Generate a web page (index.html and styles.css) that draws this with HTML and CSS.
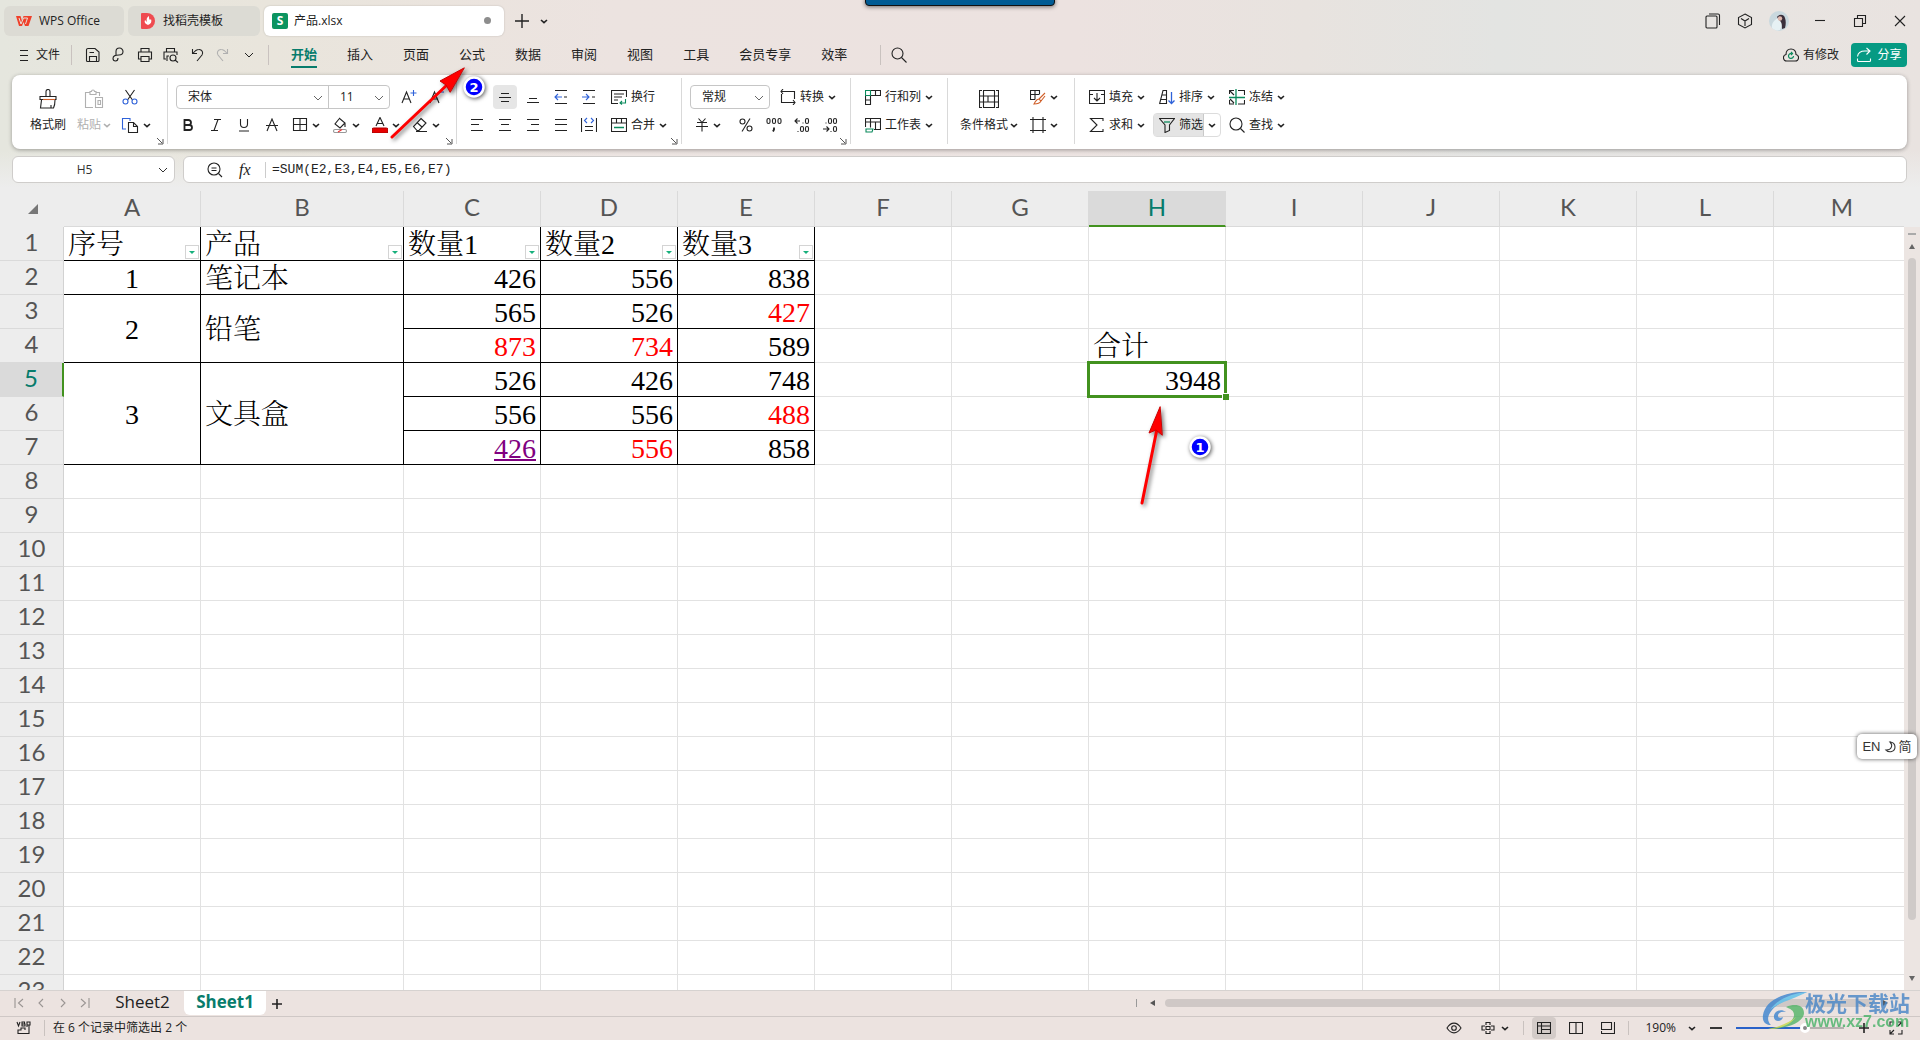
FILE: index.html
```html
<!DOCTYPE html>
<html lang="zh-CN">
<head>
<meta charset="utf-8">
<title>产品.xlsx - WPS Office</title>
<link rel="stylesheet" href="styles.css">
</head>
<body>
<svg class="defs" aria-hidden="true">
  <symbol id="chev" viewBox="0 0 8 8"><path d="M1 3l3 2.600L7 3" stroke-width="1.600"/></symbol>
  <symbol id="chev-lg" viewBox="0 0 10 8"><path d="M1 2l4 4 4-4" stroke-width="1"/></symbol>
  <symbol id="launch" viewBox="0 0 8 8"><path d="M1 1l5 5M7 2v5H2" stroke-width="1"/></symbol>
</svg>

<header class="top">
  <div class="notch"></div>
  <div class="titlebar">
    <button class="doc-tab tab-home"><svg width="16" height="12" viewBox="0 0 16 12"><path d="M0 1h4.500l1.500 5L7.500 1H16l-3.500 10H9L7.500 7 6 11H3z" fill="#f0402a" stroke="none"/><path d="M3 3l2 6 2.500-6h4L9.500 9" stroke="#e5e1da" stroke-width="1"/></svg>WPS Office</button>
    <button class="doc-tab tab-tpl"><svg width="16" height="16" viewBox="0 0 16 16"><path d="M2 0h5a8 8 0 010 16H2a1 1 0 01-1-1V1a1 1 0 011-1z" fill="#ef4b50" stroke="none"/><path d="M8 12c-3-1-4-3-3-5l2 2c-1-3 0-5 2-6 0 2 0 3 1 4l1-1c1 3 0 5-3 6z" fill="#fff" stroke="none"/></svg>找稻壳模板</button>
    <button class="doc-tab tab-doc"><svg width="16" height="16" viewBox="0 0 16 16"><rect width="16" height="16" rx="2" fill="#0c9460" stroke="none"/><text x="8" y="12" text-anchor="middle" class="logo-s">S</text></svg>产品.xlsx<i class="dirty"></i></button>
    <button class="plain add"><svg width="14" height="14" viewBox="0 0 14 14"><path d="M7 0v14M0 7h14" stroke-width="1.400"/></svg></button>
    <button class="plain more"><svg width="8" height="8"><use href="#chev"/></svg></button>
    <div class="window-tools">
      <button class="plain w32"><svg width="16" height="16" viewBox="0 0 16 16"><rect x="1" y="3" width="11" height="12" rx="1"/><path d="M4 1h9a1.500 1.500 0 011.500 1.500V12"/></svg></button>
      <button class="plain w32"><svg width="16" height="16" viewBox="0 0 16 16"><path d="M8 1l6.500 3.500v7L8 15l-6.500-3.500v-7zM4 5.500L8 8l4-2.500M8 8v5"/></svg></button>
      <button class="plain w36 me"><svg width="20" height="20" viewBox="0 0 20 20" class="solid"><circle cx="10" cy="10" r="10" fill="#c9d8de"/><path d="M3 17c-1-5 3-9 7-10l4 4-3 8c-3 1-6 0-8-2z" fill="#e6f1f4"/><path d="M8 6c2-3 7-3 8 1 1 3 1 6 0 10l-3 1c0-4 0-7-3-9z" fill="#3a2f3b"/><ellipse cx="11" cy="7.500" rx="2.200" ry="2.200" fill="#e0b8ae"/></svg></button>
      <button class="plain w40"><svg width="12" height="12" viewBox="0 0 12 12"><path d="M1 5.500h10"/></svg></button>
      <button class="plain w40"><svg width="14" height="14" viewBox="0 0 14 14"><path d="M1.500 4.500h8v8h-8zM4.500 4.500v-3h8v8h-3"/></svg></button>
      <button class="plain w40"><svg width="12" height="12" viewBox="0 0 12 12"><path d="M1 1l10 10M11 1L1 11"/></svg></button>
    </div>
  </div>

  <nav class="menubar">
    <button class="plain file"><svg width="10" height="14" viewBox="0 0 10 14"><path d="M1 2.500h8M1 7.500h8M1 12.500h8"/></svg>文件</button>
    <span class="vsep"></span>
    <div class="quick">
      <button class="plain"><svg width="16" height="16" viewBox="0 0 16 16"><path d="M3 1.500h7L14 5v8.500a1 1 0 01-1 1H2.500a1 1 0 01-1-1V3A1.500 1.500 0 013 1.500zM4.500 14.500v-5h7v5M4.500 5.500H9"/></svg></button>
      <button class="plain"><svg width="16" height="16" viewBox="0 0 16 16"><path d="M5 9V4.500a3.500 3.500 0 117 0C12 7 10 8 8 8c-4 0-6 1-6 3.500A2.500 2.500 0 004.500 14C7 14 7 12 7 11"/></svg></button>
      <button class="plain"><svg width="16" height="16" viewBox="0 0 16 16"><path d="M4 5V1.500h8V5M4 12H1.500V5h13v7H12M4 9.500h8v5H4z"/></svg></button>
      <button class="plain"><svg width="16" height="16" viewBox="0 0 16 16"><path d="M3.500 5V1.500h8V5M3 12H1V5h13v3M4 14V9h2"/><circle cx="10" cy="11" r="3"/><path d="M12 13l3 2.500"/></svg></button>
      <button class="plain"><svg width="16" height="16" viewBox="0 0 16 16"><path d="M3.500 2v4.500H8M4 6.500c2-3 4-4 6-4a3.500 3.500 0 013 5.500L8 14"/></svg></button>
      <button class="plain faded"><svg width="16" height="16" viewBox="0 0 16 16"><path d="M12.500 2v4.500H8M12 6.500c-2-3-4-4-6-4A3.500 3.500 0 003 8l5 6"/></svg></button>
      <button class="plain"><svg width="10" height="8"><use href="#chev-lg"/></svg></button>
    </div>
    <span class="vsep"></span>
    <div class="tabs">
      <a href="#" class="on">开始</a><a href="#">插入</a><a href="#">页面</a><a href="#">公式</a><a href="#">数据</a><a href="#">审阅</a><a href="#">视图</a><a href="#">工具</a><a href="#">会员专享</a><a href="#">效率</a>
    </div>
    <span class="vsep"></span>
    <button class="plain find"><svg width="16" height="16" viewBox="0 0 16 16"><circle cx="6.500" cy="6.500" r="5.500"/><path d="M10.500 10.500L15.500 15.500"/></svg></button>
    <button class="plain cloud"><svg width="16" height="14" viewBox="0 0 16 14"><path d="M4 13a3.300 3.300 0 01-1-6.500C3 3 5 1 8 1s5 2 5 5.500A3.300 3.300 0 0112 13z"/><path d="M10.500 8a2.500 2.500 0 11-2-2.500M8 4l1.500 1.500L8 7" stroke="#0b8a5c" stroke-width="1.200"/></svg>有修改</button>
    <button class="share"><svg width="16" height="16" viewBox="0 0 16 16"><path d="M1.500 9.500C2 6 5 4 9 4h5M10.500 1L14 4l-3.500 3.500M1.500 11.500v2a1 1 0 001 1h11a1 1 0 001-1v-2"/></svg>分享</button>
  </nav>

  <section class="ribbon">
    <div class="group g-clip">
      <button class="big w48"><svg width="20" height="20" viewBox="0 0 20 20"><path d="M2 7.500h16v3H2zM3.500 11l-1 8h13c1-2 1.500-5 1.500-8M8 7V2.500a2 2 0 014 0V7M13 19v-3"/><path d="M5 10.500h12" stroke="#d0602a"/></svg><span>格式刷</span></button>
      <button class="big w44 faded"><svg width="20" height="20" viewBox="0 0 20 20"><path d="M9 18.500H1.500v-15H6M12 3.500h3.500V7M6 2.500h1.500a1.500 1.500 0 013 0H12v3H6zM11.500 8.500h7v10h-7zM14 11.500h2.500v4H14z"/></svg><span>粘贴<svg width="8" height="8"><use href="#chev"/></svg></span></button>
      <div class="rows">
        <div class="row"><button class="ib"><svg width="16" height="16" viewBox="0 0 16 16"><path d="M3.500 1l7 10M12.500 1l-7 10"/><circle cx="3.500" cy="12.500" r="2.500" stroke="#2f62d9"/><circle cx="12.500" cy="12.500" r="2.500" stroke="#2f62d9"/></svg></button></div>
        <div class="row"><button class="dd"><svg width="18" height="16" viewBox="0 0 18 16"><path d="M5 12H1.500V1.500H9V4" stroke="#2f62d9"/><path d="M7.500 5.500h5l4 4v6h-9zM12.500 5.500v4h4"/></svg><svg width="8" height="8"><use href="#chev"/></svg></button></div>
      </div>
      <svg class="launch" width="8" height="8"><use href="#launch"/></svg>
    </div>

    <div class="group g-font">
      <div class="rows">
        <div class="row">
          <div class="pair">
            <label class="sel sel-font"><select aria-label="字体"><option>宋体</option></select><svg width="10" height="8"><use href="#chev-lg"/></svg></label>
            <label class="sel sel-size"><select aria-label="字号"><option>11</option></select><svg width="10" height="8"><use href="#chev-lg"/></svg></label>
          </div>
          <button class="ib"><svg width="16" height="16" viewBox="0 0 16 16"><path d="M1 14L5.500 3 10 14M2.500 10h6"/><path d="M12.500 1v6M9.500 4h6" stroke="#2f62d9"/></svg></button>
          <button class="ib"><svg width="16" height="16" viewBox="0 0 16 16"><path d="M1 14L5.500 3 10 14M2.500 10h6"/><path d="M10 3h5" stroke="#2f62d9"/></svg></button>
        </div>
        <div class="row">
          <button class="ib"><svg width="12" height="14" viewBox="0 0 12 14"><path d="M2.500 2h4a2.500 2.500 0 010 5h-4zM2.500 7h5a2.500 2.500 0 010 5h-5z" stroke-width="1.800"/></svg></button>
          <button class="ib"><svg width="12" height="14" viewBox="0 0 12 14"><path d="M4 1.500h7M1 12.500h7M8 1.500l-4 11"/></svg></button>
          <button class="ib"><svg width="12" height="14" viewBox="0 0 12 14"><path d="M2.500 1v5a3.500 3.500 0 007 0V1M1 13h10"/></svg></button>
          <button class="ib"><svg width="14" height="14" viewBox="0 0 14 14"><path d="M1 7.500h12M2 13L7 1l5 12"/></svg></button>
          <button class="dd"><svg width="16" height="16" viewBox="0 0 16 16"><path d="M1.500 1.500h13v12h-13zM8 1.500v12M1.500 7.500h13"/></svg><svg width="8" height="8"><use href="#chev"/></svg></button>
          <button class="dd"><svg width="16" height="16" viewBox="0 0 16 16"><path d="M7 1l6 5-5 5-5-4 4-5M13 6v4"/><path d="M4 12.500h9a1.500 1.500 0 010 3H3a1.500 1.500 0 010-3z" stroke="#999"/><path d="M6 15l4-2.500" stroke="#e33"/></svg><svg width="8" height="8"><use href="#chev"/></svg></button>
          <button class="dd"><svg width="16" height="16" viewBox="0 0 16 16"><path d="M4 9L8 .500 12 9M5.500 6.500h5"/><rect x="0" y="11" width="16" height="5" rx="2" fill="#e60000" stroke="#a00"/></svg><svg width="8" height="8"><use href="#chev"/></svg></button>
          <button class="dd"><svg width="16" height="16" viewBox="0 0 16 16"><path d="M9 1.500L14 6l-7 7.500H5L1.500 9.500zM5 5.500l5 4.500M4 14.500h11"/></svg><svg width="8" height="8"><use href="#chev"/></svg></button>
        </div>
      </div>
      <svg class="launch" width="8" height="8"><use href="#launch"/></svg>
    </div>

    <div class="group g-align">
      <div class="rows">
        <div class="row">
          <button class="ib" aria-label="顶端对齐"></button>
          <button class="ib on"><svg width="14" height="14" viewBox="0 0 14 14"><path d="M3 3.500h8M1 7.500h12M3 11.500h8"/></svg></button>
          <button class="ib"><svg width="14" height="14" viewBox="0 0 14 14"><path d="M3 8.500h8M1 12.500h12"/></svg></button>
          <button class="ib"><svg width="14" height="14" viewBox="0 0 14 14"><path d="M1 .500h12M1 13.500h12M10 7h3"/><path d="M8 7H1M4 4L1 7l3 3" stroke="#2f62d9"/></svg></button>
          <button class="ib"><svg width="14" height="14" viewBox="0 0 14 14"><path d="M1 .500h12M1 13.500h12M10 7h3"/><path d="M0 7h7M4 4l3 3-3 3" stroke="#2f62d9"/></svg></button>
          <button class="lb"><svg width="16" height="16" viewBox="0 0 16 16"><path d="M7 14.500H.500V1.500h15V8M3 5h10M3 8h8M3 11h4"/><path d="M14.500 10v4H9.500M11 12l-2 2 2 1.500" stroke="#0b8a5c"/></svg>换行</button>
        </div>
        <div class="row">
          <button class="ib"><svg width="14" height="14" viewBox="0 0 14 14"><path d="M1 1.500h12M1 6.500h8M1 12.500h12"/></svg></button>
          <button class="ib"><svg width="14" height="14" viewBox="0 0 14 14"><path d="M1 1.500h12M3 6.500h8M1 12.500h12"/></svg></button>
          <button class="ib"><svg width="14" height="14" viewBox="0 0 14 14"><path d="M1 1.500h12M5 6.500h8M1 12.500h12"/></svg></button>
          <button class="ib"><svg width="14" height="14" viewBox="0 0 14 14"><path d="M1 1.500h12M1 6.500h12M1 12.500h12"/></svg></button>
          <button class="ib"><svg width="16" height="16" viewBox="0 0 16 16"><path d="M.500 1v14M15.500 1v14M4 9.500h8M4 13.500h8"/><path d="M6 1L3.500 3.500 6 6M10 1l2.500 2.500L10 6" stroke="#2f62d9"/></svg></button>
          <button class="lb"><svg width="16" height="16" viewBox="0 0 16 16"><path d="M.500 1.500h15v13H.500zM.500 6h15M5.500 1.500V6M10.500 1.500V6"/><path d="M3 10.500h10" stroke="#0b8a5c" stroke-width="1.500"/></svg>合并<svg width="8" height="8"><use href="#chev"/></svg></button>
        </div>
      </div>
      <svg class="launch" width="8" height="8"><use href="#launch"/></svg>
    </div>

    <div class="group g-num">
      <div class="rows">
        <div class="row">
          <label class="sel sel-num"><select aria-label="数字格式"><option>常规</option></select><svg width="10" height="8"><use href="#chev-lg"/></svg></label>
          <button class="lb"><svg width="16" height="16" viewBox="0 0 16 16"><path d="M3 0L1 2.500 3 5M1 2.500h13.500V10M1.500 5v8.500H15M13 11l2 2.500-2 2.500"/></svg>转换<svg width="8" height="8"><use href="#chev"/></svg></button>
        </div>
        <div class="row">
          <button class="dd"><svg width="14" height="14" viewBox="0 0 14 14"><path d="M3.500 .500L7 4.500l3.500-4M2 4.500h10M1 8.500h12M7 4.500v9"/></svg><svg width="8" height="8"><use href="#chev"/></svg></button>
          <button class="ib pct"><svg width="14" height="14" viewBox="0 0 14 14"><circle cx="3.500" cy="3.500" r="2.500"/><circle cx="10.500" cy="10.500" r="2.500"/><path d="M11 .500L3 13.500"/></svg></button>
          <button class="ib"><svg width="16" height="16" viewBox="0 0 16 16"><rect x="1" y="1.500" width="3" height="5" rx="1.500"/><rect x="6.500" y="1.500" width="3" height="5" rx="1.500"/><rect x="12" y="1.500" width="3" height="5" rx="1.500"/><path d="M8 10.500v2l-1 2" stroke-width="1.800"/></svg></button>
          <button class="ib"><svg width="16" height="16" viewBox="0 0 16 16"><path d="M6 4H1M3.500 1.500L1 4l2.500 2.500M8.500 6h1M3.500 14.500h1"/><rect x="11.500" y="1.500" width="3" height="5" rx="1.500"/><rect x="6.500" y="9.500" width="3" height="5" rx="1.500"/><rect x="11.500" y="9.500" width="3" height="5" rx="1.500"/></svg></button>
          <button class="ib"><svg width="16" height="16" viewBox="0 0 16 16"><path d="M1 12h6M4.500 9.500L7 12l-2.500 2.500M3.500 6h1M8.500 14.500h1"/><rect x="6.500" y="1.500" width="3" height="5" rx="1.500"/><rect x="11.500" y="1.500" width="3" height="5" rx="1.500"/><rect x="11.500" y="9.500" width="3" height="5" rx="1.500"/></svg></button>
        </div>
      </div>
      <svg class="launch" width="8" height="8"><use href="#launch"/></svg>
    </div>

    <div class="group g-cells">
      <div class="rows">
        <div class="row"><button class="lb"><svg width="16" height="16" viewBox="0 0 16 16"><path d="M5.500 1.500h10v5h-10M10.500 1.500v5M.500 6.500v9h5v-9M.500 11h5"/><path d="M.500 1.500h5v5h-5z" stroke="#0b8a5c"/></svg>行和列<svg width="8" height="8"><use href="#chev"/></svg></button></div>
        <div class="row"><button class="lb"><svg width="16" height="16" viewBox="0 0 16 16"><path d="M.500 10V1.500h15v11H9M.500 5h15M5.500 1.500v9M10.500 5v7.500"/><path d="M1 12h7l-1 3H1z" stroke="#0b8a5c"/></svg>工作表<svg width="8" height="8"><use href="#chev"/></svg></button></div>
      </div>
    </div>

    <div class="group g-style">
      <button class="big w70"><svg width="20" height="20" viewBox="0 0 20 20"><path d="M3 1.500H.500v17H3M17 1.500h2.500v17H17M.500 7h4M.500 13h4M15.500 7h4M15.500 13h4M4.500 1.500h11v17h-11zM4.500 7h11M4.500 13h11M9 7v6"/></svg><span>条件格式<svg width="8" height="8"><use href="#chev"/></svg></span></button>
      <div class="rows">
        <div class="row"><button class="dd"><svg width="16" height="16" viewBox="0 0 16 16"><path d="M5 10.500H.500v-9h9V5M.500 5.500h9M5 1.500v9"/><path d="M15 4l-6 6M15 7l-4 5M9 10c-3 0-3 2-5 5 4 0 6-1 7-3z" stroke="#d0602a"/></svg><svg width="8" height="8"><use href="#chev"/></svg></button></div>
        <div class="row"><button class="dd"><svg width="16" height="16" viewBox="0 0 16 16"><path d="M3 0v16M13 0v16M0 2.500h16M0 13.500h16"/></svg><svg width="8" height="8"><use href="#chev"/></svg></button></div>
      </div>
    </div>

    <div class="group g-edit">
      <div class="rows">
        <div class="row">
          <button class="lb w70"><svg width="16" height="16" viewBox="0 0 16 16"><path d="M4 5.500H.500v-4h15v4H12M.500 5.500v9h15v-9M8 4v8M5 9l3 3 3-3"/></svg>填充<svg width="8" height="8"><use href="#chev"/></svg></button>
          <button class="lb w70"><svg width="16" height="16" viewBox="0 0 16 16"><path d="M.500 15L4 1.500h3.500V15M3 6h4.500M2 10.500h5.500M.500 14.500h7"/><path d="M12.500 3v11M9.500 11.500l3 3 3-3" stroke="#2f62d9" stroke-width="1.300"/></svg>排序<svg width="8" height="8"><use href="#chev"/></svg></button>
          <button class="lb w70"><svg width="16" height="16" viewBox="0 0 16 16"><path d="M.500 5V1.500H5M.500 11v4H5M9 1.500h6.500V6M9 15h6.500v-4M1 2l4 4M1 10l4 4"/><path d="M0 8.500h16M7 0v16" stroke="#0b8a5c" stroke-width="1.300"/></svg>冻结<svg width="8" height="8"><use href="#chev"/></svg></button>
        </div>
        <div class="row">
          <button class="lb w70"><svg width="16" height="16" viewBox="0 0 16 16"><path d="M14 4V1.500H1.500L8 8l-6.500 6.500H14V12"/></svg>求和<svg width="8" height="8"><use href="#chev"/></svg></button>
          <div class="split"><button class="lb filter"><svg width="16" height="16" viewBox="0 0 16 16"><path d="M.500 1.500h15L10.500 8v5.500L6 15.500V8z"/><path d="M5 5h6" stroke="#0b8a5c" stroke-width="1.300"/></svg>筛选</button><button class="plain drop"><svg width="8" height="8"><use href="#chev"/></svg></button></div>
          <button class="lb w70"><svg width="16" height="16" viewBox="0 0 16 16"><circle cx="7" cy="7" r="6"/><path d="M11.500 11.500L15.500 15.500"/></svg>查找<svg width="8" height="8"><use href="#chev"/></svg></button>
        </div>
      </div>
    </div>
  </section>

  <div class="formula-row">
    <label class="name-box"><input type="text" value="H5" aria-label="名称框"><svg width="10" height="8"><use href="#chev-lg"/></svg></label>
    <div class="formula">
      <svg width="16" height="16" viewBox="0 0 16 16"><circle cx="7" cy="7" r="6"/><path d="M11.500 11.500L15 15M4.500 6h5M4.500 8.500h5"/></svg>
      <span class="fx">fx</span>
      <input type="text" value="=SUM(E2,E3,E4,E5,E6,E7)" aria-label="编辑栏">
    </div>
  </div>
</header>

<main class="sheet">
  <div class="grid-wrap"><table class="grid" id="grid"></table></div>
  <div class="vscroll"><i class="dash"></i><i class="up"></i><i class="thumb"></i><i class="down"></i></div>
  <svg class="callouts" width="1920" height="520" viewBox="0 0 1920 520">
    <g class="arrows">
      <path d="M1142 503L1158 424" />
      <path d="M1160 407L1149 433 1156 430 1162 435z" class="tip"/>
      <path d="M392 137L448 84"/>
      <path d="M464 68L440 81 446 85 450 92z" class="tip"/>
    </g>
    <g class="marks"><circle cx="1200" cy="447" r="9.500"/><circle cx="474" cy="87" r="9.500"/></g>
    <text x="1200" y="452">1</text><text x="474" y="92">2</text>
  </svg>
</main>

<footer class="bottom">
  <div class="sheet-tabs">
    <div class="nav">
      <button class="plain"><svg width="10" height="10" viewBox="0 0 10 10"><path d="M1 0v10M9 1L4.500 5 9 9"/></svg></button>
      <button class="plain"><svg width="10" height="10" viewBox="0 0 10 10"><path d="M7 1L3 5l4 4"/></svg></button>
      <button class="plain"><svg width="10" height="10" viewBox="0 0 10 10"><path d="M3 1l4 4-4 4"/></svg></button>
      <button class="plain"><svg width="10" height="10" viewBox="0 0 10 10"><path d="M9 0v10M1 1l4.500 4L1 9"/></svg></button>
    </div>
    <button class="st">Sheet2</button><button class="st on">Sheet1</button>
    <button class="plain plus"><svg width="10" height="10" viewBox="0 0 10 10"><path d="M5 0v10M0 5h10" stroke-width="1.600"/></svg></button>
    <div class="hscroll"><i class="grip"></i><i class="left"></i><i class="bar"></i><i class="right"></i></div>
  </div>
  <div class="status">
    <svg width="16" height="14" viewBox="0 0 16 14"><path d="M1 1l1.500 4L4 1M6 1h2.500v2H6zM6 3h3v2H6zM11 6V1h3v3h-3M13 4v8.500H2V9h3V7h4v2"/></svg>
    <span class="msg">在 6 个记录中筛选出 2 个</span>
    <div class="view">
      <button class="plain w36 eye"><svg width="16" height="12" viewBox="0 0 16 12"><path d="M1 6c4-6.500 10-6.500 14 0-4 6.500-10 6.500-14 0z"/><circle cx="8" cy="6" r="2.300"/></svg></button>
      <button class="plain w40 move"><svg width="14" height="14" viewBox="0 0 14 14"><path d="M5 4V1.500h4V4M5 10v2.500h4V10M4 5H1v4h3M10 5h3v4h-3M5 5.500h4v3H5z"/></svg><svg width="8" height="8"><use href="#chev"/></svg></button>
      <span class="vsep"></span>
      <div class="modes">
        <button class="plain w24 on"><svg width="14" height="14" viewBox="0 0 14 14"><path d="M.500 1.500h13v11H.500zM.500 5h13M4.500 1.500v11M4.500 8.500h9"/></svg></button>
        <button class="plain w24"><svg width="14" height="14" viewBox="0 0 14 14"><path d="M.500 1.500h13v11H.500zM7 1.500v11"/></svg></button>
        <button class="plain w24"><svg width="14" height="14" viewBox="0 0 14 14"><path d="M.500 8.500v-7h10v7zM13.500 1v11.500H.500V10"/></svg></button>
      </div>
      <span class="vsep"></span>
      <button class="plain zoom">190%<svg width="8" height="8"><use href="#chev"/></svg></button>
      <button class="plain w24"><svg width="12" height="12" viewBox="0 0 12 12"><path d="M0 6h12" stroke-width="1.800"/></svg></button>
      <input type="range" min="0" max="100" value="65" aria-label="缩放">
      <button class="plain w24"><svg width="10" height="10" viewBox="0 0 10 10"><path d="M5 0v10M0 5h10" stroke-width="1.600"/></svg></button>
      <button class="plain w40"><svg width="14" height="14" viewBox="0 0 14 14"><path d="M9 1h4v4M13 1L9 5M1 9v4h4M1 13l4-4M9 13h4V9M1 5V1h4"/></svg></button>
    </div>
  </div>
  <div class="brand">
    <svg width="46" height="40" viewBox="0 0 46 40"><path d="M45 1C22 0 3 10 1 24c-1 6 2 10 8 10-4-4-4-9 1-15C18 10 31 6 45 1z" fill="#3f86cf"/><path d="M45 1C30 2 14 9 8 19c7-7 22-10 37-18z" fill="#5cc0ec"/><path d="M24 16c9-4 18-2 18 6 0 8-14 16-36 16 17-2 26-8 26-14 0-5-4-6-8-8z" fill="#55b56a"/><path d="M34 26c-5 7-15 12-28 12 14-3 22-7 28-12z" fill="#c9d94e"/><path d="M12 27c-1-7 7-10 12-6-5-1-8 1-8 4 0 2 3 2 5 1-1 5-8 5-9 1z" fill="#3f86cf"/></svg>
    <div><b>极光下载站</b><span>www.xz7.com</span></div>
  </div>
</footer>
<div class="ime">EN <svg width="12" height="12" viewBox="0 0 12 12"><path d="M6 1c3 3 2 8-4 8 3 3 9 2 9-3 0-3-2-5-5-5z"/></svg> 简</div>
<script src="grid.js"></script>
</body>
</html>
```

FILE: styles.css
```css
* { box-sizing: border-box; }
html, body { height: 100%; margin: 0; }
body {
  display: flex; flex-direction: column; overflow: hidden; position: relative;
  background: #ece3e0; color: #222;
  font: 12px/16px "Open Sans", "Noto Sans CJK SC", sans-serif;
}
svg { fill: none; stroke: currentColor; stroke-width: 1.1; flex: none; }
svg.solid { stroke: none; }
.defs { position: absolute; width: 0; height: 0; }
button, select, input { font: inherit; color: inherit; }
button { border: 0; background: none; padding: 0; display: flex; align-items: center; justify-content: center; white-space: nowrap; }
a { color: inherit; text-decoration: none; }
.w24 { width: 24px; } .w32 { width: 32px; } .w36 { width: 36px; } .w40 { width: 40px; }
.w44 { width: 44px; } .w48 { width: 48px; } .w70 { width: 70px; }
.faded { color: #b0b0b0; }
.vsep { width: 1px; height: 20px; background: #c9c2bf; }

.top {
  flex: none; height: 191px; position: relative;
  background:
    linear-gradient(to bottom, transparent 150px, #ededed 188px),
    linear-gradient(to right, #e5e6de 0, #e9e5dc 14%, #ece3e0 32%, #ece2e0 56%, #e8e3df 68%, #e3e4e2 78%, #e8e4e1 92%, #e9e3e0 100%);
}
.notch { position: absolute; left: 50%; top: -4px; width: 190px; height: 10px; margin-left: -95px; background: #005b94; border: 1px solid #111; border-radius: 4px; box-shadow: 0 1px 4px #0008; }

.titlebar { display: flex; align-items: center; height: 41px; padding-left: 4px; gap: 4px; }
.doc-tab { height: 30px; justify-content: flex-start; gap: 7px; border-radius: 6px; background: #dcdbd4; padding: 0 12px; }
.tab-home { width: 120px; } .tab-tpl { width: 132px; }
.tab-doc { width: 240px; background: #fff; padding: 0 8px; gap: 6px; box-shadow: 0 0 2px #0003; }
.logo-s { font: bold 12px "Open Sans", sans-serif; fill: #fff; stroke: none; }
.dirty { width: 7px; height: 7px; border-radius: 50%; background: #8d8d8d; margin: 0 5px 0 auto; }
.add { width: 28px; } .more { width: 8px; }
.window-tools { display: flex; align-items: center; margin-left: auto; }
.me { margin-right: 3px; }

.menubar { display: flex; align-items: center; height: 28px; padding: 0 13px 0 19px; }
.file { gap: 7px; margin-right: 11px; }
.quick { display: flex; padding: 0 6px 0 8px; }
.quick button { width: 26px; }
.tabs { display: flex; gap: 30px; padding: 0 33px 0 22px; font-size: 13px; }
.tabs a { height: 26px; line-height: 24px; border-bottom: 2px solid transparent; }
.tabs .on { color: #077c6c; font-weight: bold; border-color: #077c6c; }
.find { width: 36px; }
.cloud { margin-left: auto; gap: 4px; }
.share { margin-left: 12px; width: 56px; height: 24px; gap: 5px; border-radius: 4px; background: #069a83; color: #fff; }

.ribbon { display: flex; height: 74px; margin: 6px 13px 0 12px; background: #fff; border-radius: 8px; box-shadow: 0 1px 4px #0005; padding: 3px 0 5px; }
.group { position: relative; display: flex; align-items: center; border-right: 1px solid #d9d9d9; padding-left: 6px; }
.g-clip { width: 156px; padding-left: 12px; }
.g-font { width: 289px; } .g-align { width: 225px; } .g-num { width: 169px; }
.g-cells { width: 97px; } .g-style { width: 127px; } .g-edit { border-right: 0; }
.rows { display: flex; flex-direction: column; gap: 4px; }
.row { display: flex; height: 24px; }
.launch { position: absolute; right: 3px; bottom: -1px; color: #555; }
.big { flex-direction: column; gap: 8px; height: 52px; }
.big span { display: flex; align-items: center; gap: 2px; }
.ib { width: 28px; height: 24px; }
.ib.on { background: #e6e6e6; border-radius: 4px; width: 24px; margin: 0 2px; }
.dd { width: 40px; height: 24px; gap: 4px; }
.lb { height: 24px; gap: 4px; padding: 0 6px 0 8px; justify-content: flex-start; }
.pct { margin-left: 4px; }
.pair { display: flex; border: 1px solid #c6c6c6; border-radius: 4px; margin: 0 5px 0 2px; }
.sel { position: relative; display: flex; }
.sel svg { position: absolute; right: 5px; top: 8px; color: #666; pointer-events: none; }
.sel select { appearance: none; border: 0; background: none; width: 100%; padding: 0 0 0 11px; outline: 0; }
.sel-font { width: 152px; border-right: 1px solid #c6c6c6; }
.sel-size { width: 60px; }
.sel-num { width: 80px; border: 1px solid #c6c6c6; border-radius: 4px; margin: 0 2px; }
.split { display: flex; width: 68px; margin-left: 2px; border: 1px solid #dcdcdc; border-radius: 4px; }
.filter { flex: 1; height: 22px; background: #e4e4e4; border-right: 1px solid #c9c9c9; padding: 0 0 0 5px; }
.drop { width: 16px; }

.formula-row { display: flex; gap: 8px; height: 27px; margin: 7px 13px 0 12px; }
.name-box, .formula { display: flex; align-items: center; background: #fff; border: 1px solid #cfcdcb; border-radius: 6px; }
.name-box { width: 163px; padding-right: 6px; color: #333; }
.name-box input { flex: 1; min-width: 0; border: 0; background: none; text-align: center; padding: 0 2px 0 0; }
.formula { flex: 1; padding-left: 23px; }
.fx { font: italic 16px/20px "Liberation Serif", serif; margin: 0 10px 0 16px; width: 16px; }
.formula input { flex: 1; height: 16px; border: 0; border-left: 1px solid #ccc; padding: 0 0 0 6px; font: 13px/16px "Liberation Mono", monospace; }

.sheet { flex: 1; min-height: 0; display: flex; position: relative; background: #ededed; }
.grid-wrap { flex: 1; min-width: 0; overflow: hidden; }
.grid { width: calc(100% + 7px); table-layout: fixed; border-collapse: separate; border-spacing: 0; color: #000; font: 28px/30px "Liberation Serif", "Noto Serif CJK SC", "Noto Sans CJK SC", serif; font-weight: 300; }
.grid th { background: #ededed; color: #555; font: 24px/30px Lato, sans-serif; padding: 0 0 3px; border: 0 solid #dadada; border-right-width: 1px; border-bottom-width: 1px; }
.grid thead th { height: 36px; }
.grid thead th:first-child { border-right-color: #ededed; border-bottom-color: #ededed; }
.grid tbody th { border-right-color: #d2d2d2; }
.grid thead th.sel-h { background: #dadada; color: #077c6c; border-bottom: 2px solid #42921f; }
.grid tbody th.sel-h { background: #dadada; color: #077c6c; border-right: 2px solid #42921f; }
.corner { display: block; width: 10px; height: 10px; margin: 4px 0 0 28px; background: #777; clip-path: polygon(100% 0, 100% 100%, 0 100%); }
.grid td { background: #fff; height: 34px; padding: 3px 4px 0; border: 0 solid #e2e2e2; border-right-width: 1px; border-bottom-width: 1px; position: relative; white-space: nowrap; }
.grid td.data { border-color: #000; }
.grid .num { text-align: right; }
.grid .mid { text-align: center; }
.grid .red { color: #f00; }
.grid .visited { color: #800080; text-decoration: underline; text-decoration-thickness: 2px; }
.grid tr { height: 34px; }
.col-head { width: 64px; } .col { width: 137px; } .col-b { width: 203px; }
.flt { position: absolute; right: 1px; bottom: 1px; width: 14px; height: 14px; background: #fff; border: 1px solid #d4d4d4; }
.flt::after { content: ""; position: absolute; left: 3px; top: 5px; border: 3px solid transparent; border-top-color: #17b07c; border-bottom: 0; }
.grid .cursor { z-index: 1; }
.cursor::before { content: ""; position: absolute; inset: -2px; border: 3px solid #42921f; }
.cursor::after { content: ""; position: absolute; right: -4px; bottom: -4px; width: 6px; height: 6px; background: #42921f; border: 1px solid #fff; border-width: 1px 0 0 1px; }

.vscroll { width: 16px; display: flex; flex-direction: column; align-items: center; background: #ece5e2; margin-top: 36px; }
.dash { width: 8px; height: 2px; background: #aaa; margin-top: 6px; }
.up { border: 3px solid transparent; border-bottom: 5px solid #666; border-top: 0; margin: 9px 0; }
.down { border: 3px solid transparent; border-top: 5px solid #666; border-bottom: 0; margin: 56px 0 9px; }
.thumb { flex: 1; width: 8px; border-radius: 4px; background: #cfcac8; }
.callouts { position: absolute; left: 0; top: -191px; z-index: 3; pointer-events: none; }
.arrows { filter: drop-shadow(2px 2px 2px #0008); }
.arrows path { stroke: #f00; stroke-width: 3; stroke-linecap: round; }
.arrows .tip { fill: #f00; stroke: #c00; stroke-width: 1; }
.marks { filter: drop-shadow(1px 1px 2px #000a); }
.marks circle { fill: #00f; stroke: #fff; stroke-width: 2.5; }
.callouts text { fill: #fff; stroke: none; font: bold 13px "DejaVu Sans", sans-serif; text-anchor: middle; }

.bottom { flex: none; position: relative; background: #ece3e0; border-top: 1px solid #d6d2d0; }
.sheet-tabs { display: flex; height: 26px; border-bottom: 1px solid #cfc8c6; }
.nav { display: flex; padding: 0 8px 2px 8px; color: #9a9593; align-items: center; }
.nav button { width: 22px; }
.st { font-size: 17px; width: 80px; height: 24px; padding: 0 3px 2px 0; color: #222; }
.st.on { width: 82px; background: #fff; color: #077c6c; font-weight: bold; border-radius: 0 0 6px 6px; padding-right: 0; }
.plus { width: 22px; }
.hscroll { margin-left: auto; width: 784px; display: flex; align-items: center; padding-bottom: 1px; }
.grip { width: 1px; height: 8px; background: #999; }
.left { border: 3px solid transparent; border-right: 5px solid #555; border-left: 0; margin: 0 10px 0 13px; }
.bar { flex: 1; height: 8px; border-radius: 4px; background: #cfc8c6; }
.right { border: 3px solid transparent; border-left: 5px solid #555; border-right: 0; margin: 0 32px 0 10px; }
.status { display: flex; align-items: center; height: 23px; padding: 0 0 1px 16px; color: #222; }
.msg { margin-left: 12px; padding-left: 8px; border-left: 1px solid #c9c2bf; }
.view { display: flex; align-items: center; margin-left: auto; height: 22px; padding-right: 4px; }
.view .vsep { height: 14px; margin: 0 8px; }
.modes { display: flex; gap: 8px; }
.modes button { height: 22px; border-radius: 4px; }
.modes .on { background: #d3cbc8; }
.eye { margin-right: 3px; }
.move { gap: 6px; }
.zoom { gap: 12px; padding: 0 8px; }
.view input { appearance: none; width: 108px; height: 16px; margin: 0 8px; background: linear-gradient(to right, #2a62c9 65%, #b5b0ae 65%) center / 100% 2px no-repeat; }
.view input::-webkit-slider-thumb { appearance: none; width: 10px; height: 10px; border-radius: 50%; background: #888; border: 3px solid #fff; }
.brand { position: absolute; right: 10px; top: 0; display: flex; opacity: .82; pointer-events: none; }
.brand svg { stroke: none; }
.brand div { display: flex; flex-direction: column; margin-left: -3px; }
.brand b { font: bold 21px/22px "Noto Sans CJK SC", sans-serif; color: #4a87c7; }
.brand span { font: bold 16px/17px "Liberation Sans", sans-serif; color: #4bb36a; }

.ime { position: absolute; z-index: 4; right: 3px; top: 734px; width: 60px; height: 25px; display: flex; align-items: center; justify-content: center; gap: 3px; background: #fff; border-radius: 5px; box-shadow: 0 0 4px #000a; color: #333; font: 13px/16px "Liberation Sans", "Noto Sans CJK SC", sans-serif; }
```

FILE: grid.js
```js
// Builds the worksheet grid: column letters, row numbers and cell contents.
const cols = [..."ABCDEFGHIJKLM"];
const cells = {
  A1: ["序号", "data", 1, true], B1: ["产品", "data", 1, true],
  C1: ["数量1", "data", 1, true], D1: ["数量2", "data", 1, true], E1: ["数量3", "data", 1, true],
  A2: ["1", "data mid"], B2: ["笔记本", "data"],
  A3: ["2", "data mid", 2], B3: ["铅笔", "data", 2],
  A5: ["3", "data mid", 3], B5: ["文具盒", "data", 3],
  H4: ["合计", ""], H5: ["3948", "num cursor"]
};
const numbers = [
  ["426", "556", "838"], ["565", "526", "427r"], ["873r", "734r", "589"],
  ["526", "426", "748"], ["556", "556", "488r"], ["426v", "556r", "858"]
];
numbers.forEach((line, i) => line.forEach((v, j) => {
  const mark = v.endsWith("r") ? " red" : v.endsWith("v") ? " visited" : "";
  cells["CDE"[j] + (i + 2)] = [v.slice(0, 3), "data num" + mark];
}));
const covered = new Set(["A4", "B4", "A6", "B6", "A7", "B7"]);

let html = '<colgroup><col class="col-head">';
cols.forEach(c => { if (c !== "M") html += `<col class="${c === "B" ? "col-b" : "col"}">`; });
html += '<col></colgroup><thead><tr><th><span class="corner"></span></th>';
cols.forEach(c => { html += `<th scope="col"${c === "H" ? ' class="sel-h"' : ""}>${c}</th>`; });
html += "</tr></thead><tbody>";
for (let r = 1; r <= 23; r++) {
  html += `<tr><th scope="row"${r === 5 ? ' class="sel-h"' : ""}>${r}</th>`;
  cols.forEach(c => {
    const id = c + r;
    if (covered.has(id)) return;
    const [text, cls, span, filter] = cells[id] || ["", ""];
    html += `<td${cls ? ` class="${cls}"` : ""}${span > 1 ? ` rowspan="${span}"` : ""}>${text}${filter ? '<i class="flt"></i>' : ""}</td>`;
  });
  html += "</tr>";
}
document.getElementById("grid").innerHTML = html + "</tbody>";
```
